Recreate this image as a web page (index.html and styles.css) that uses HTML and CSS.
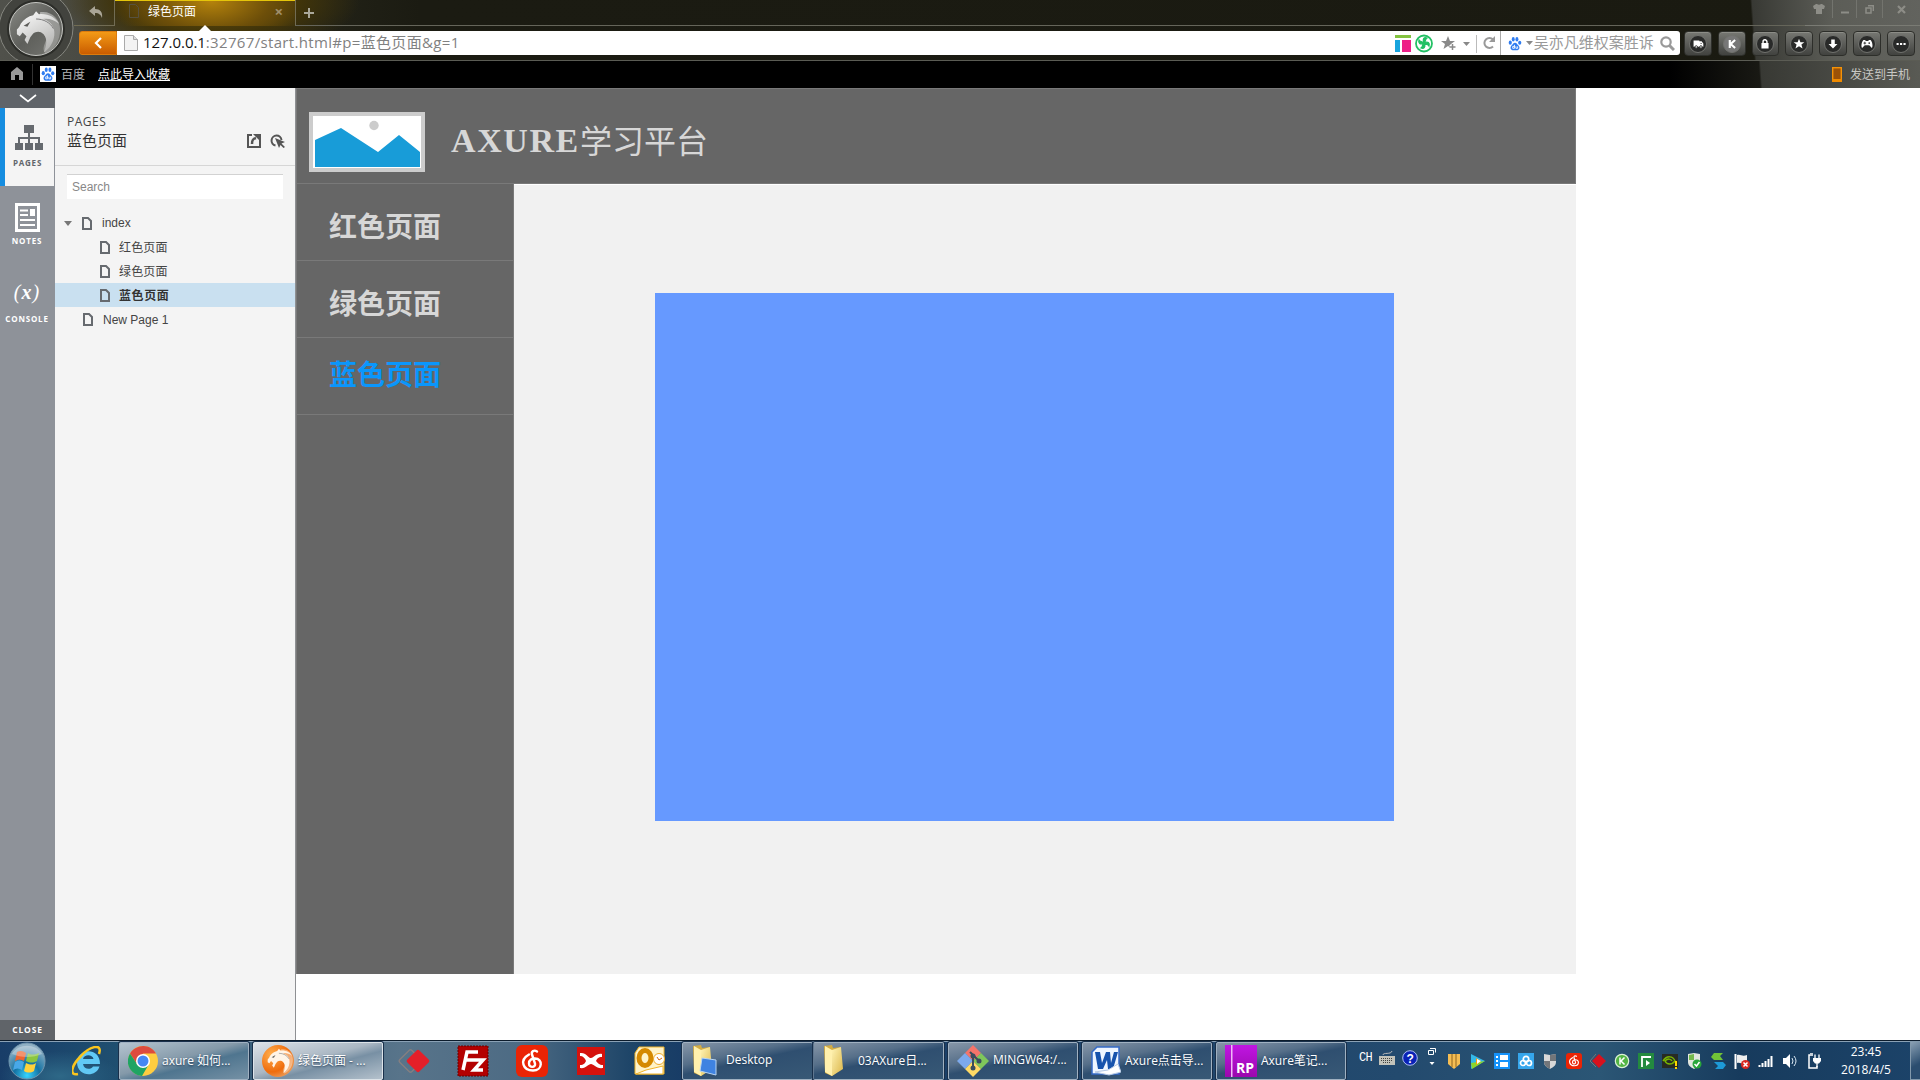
FILE: index.html
```html
<!DOCTYPE html>
<html lang="zh-CN">
<head>
<meta charset="utf-8">
<title>绿色页面</title>
<link rel="stylesheet" href="styles.css">
</head>
<body>
<svg width="0" height="0" class="defs">
  <defs>
    <linearGradient id="silver" x1="0" y1="0" x2="0.6" y2="1"><stop offset="0" stop-color="#fff"/><stop offset="1" stop-color="#b4b4b2"/></linearGradient>
    <linearGradient id="disc" x1="0" y1="0" x2="1" y2="1"><stop offset="0" stop-color="#8b8c87"/><stop offset=".5" stop-color="#5e5f5b"/><stop offset="1" stop-color="#777873"/></linearGradient>
    <linearGradient id="folderg" x1="0" y1="0" x2="1" y2="1"><stop offset="0" stop-color="#fff3b4"/><stop offset="1" stop-color="#dbb649"/></linearGradient>
    <radialGradient id="orb" cx=".5" cy=".9" r=".8"><stop offset="0" stop-color="#36d5ff"/><stop offset=".45" stop-color="#1473a4"/><stop offset="1" stop-color="#8fb0c4"/></radialGradient>
    <radialGradient id="orangeg" cx=".3" cy=".3" r=".9"><stop offset="0" stop-color="#ffae4d"/><stop offset=".6" stop-color="#ef6c0c"/><stop offset="1" stop-color="#e9b27d"/></radialGradient>
    <linearGradient id="purpleg" x1="0" y1="0" x2="0" y2="1"><stop offset="0" stop-color="#c016e2"/><stop offset="1" stop-color="#9b08ad"/></linearGradient>
    <symbol id="file" viewBox="0 0 10 13"><path d="M1 1h5l3 3v8H1z" fill="none" stroke="#666a6f" stroke-width="2"/></symbol>
    <symbol id="paw" viewBox="0 0 16 16"><g fill="#2f7cf0"><ellipse cx="2.6" cy="7" rx="1.8" ry="2.3"/><ellipse cx="6" cy="3.1" rx="1.7" ry="2.5"/><ellipse cx="10.2" cy="3.1" rx="1.7" ry="2.5"/><ellipse cx="13.4" cy="7.2" rx="1.8" ry="2.3"/><path d="M8 7c2 0 2.6 2 4 3.400 2 2 1 5.200-1.300 5.200H5.300C3 15.600 2 12.400 4 10.400 5.400 9 6 7 8 7z"/></g><path d="M7.400 9.500v4h-2v-2.200h2M9 11.200v2.300h2v-2.300" fill="none" stroke="#fff"/></symbol>
    <symbol id="dragon" viewBox="0 0 50 50"><path d="M27 6C39 4 48 13 48 24 48 36 42 45 33 49 28 44 33 38 34 33L27 24z" opacity=".45"/><path d="M3 29l0-5c2-2 3-3 4-6 3-5 8-8 13-9l3-4 3 3c9-1 17 3 21 10-6-5-12-6-17-5 7 2 13 7 12 17-1 8-5 14-11 18 3-7 4-14 0-19-4-4-8-3-11-1l-3 4-3 7-3-4 2-4-4-4-3 4z"/><path d="M10 20l7-4-3 5z" fill="#5c5c59"/><path d="M23 13c8 0 15 4 18 10" fill="none" stroke="#777" stroke-width="1"/></symbol>
    <symbol id="netease" viewBox="0 0 32 32"><rect width="32" height="32" rx="6" fill="#ea2405"/><path d="M21 6.500c-3-2-6 0-5 3l3 9c1 4-6 5-6 0 0-4 3-5 6-5 8 0 8 12-2 12C7 25.500 3 15 13 9.500" fill="none" stroke="#fff" stroke-width="2.400" stroke-linecap="round"/></symbol>
    <symbol id="folder" viewBox="0 0 26 34"><path d="M2 2l8-1 1 3 8-1v22l-9 7-7-3z" fill="#d3ac43"/><path d="M3 2l7 4v26l-7-4z" fill="#fff0ad"/><path d="M10 6l9-3 2 22-11 7z" fill="url(#folderg)"/></symbol>
  </defs>
</svg>
<div class="desktop">
  <header class="chrome">
    <div class="logo">
      <svg width="74" height="61" viewBox="0 0 74 61"><circle cx="36" cy="28" r="37" fill="#42433e" stroke="#85867f" stroke-width="1"/><circle cx="36" cy="29" r="29" fill="#2c2d29"/><circle cx="36" cy="29" r="26.500" fill="url(#disc)" stroke="#c5c6c2" stroke-width="1"/><svg x="14" y="6" width="48" height="49"><use href="#dragon" fill="url(#silver)"/></svg></svg>
    </div>
    <div class="chrome-main">
      <div class="tabs">
        <div class="undo"><svg width="14" height="12" viewBox="0 0 14 12"><path d="M0 5l6-5v3c5 0 8 3 7 9-1-3-3-5-7-5v3z" fill="#aaa596"/></svg></div>
        <div class="tab"><svg width="10" height="14" viewBox="0 0 10 14"><path d="M.5.5h6l3 3v10h-9z" fill="none" stroke="#57513f"/></svg><span>绿色页面</span><b>×</b><i class="notch"></i></div>
        <div class="tabs-rest"><svg width="10" height="10" viewBox="0 0 10 10"><path d="M5 0v10M0 5h10" stroke="#aaa89b" stroke-width="2"/></svg></div>
        <div class="window-controls">
          <span><svg width="12" height="10" viewBox="0 0 12 10"><path d="M0 2l3-2h1c1 1 3 1 4 0h1l3 2-1 3H9v5H3V5H1z" fill="#8d8d87"/></svg></span>
          <span><svg width="8" height="10"><path d="M0 8.500h8" stroke="#8d8d87" stroke-width="2"/></svg></span>
          <span><svg width="9" height="9" viewBox="0 0 9 9"><path d="M1 3h5v5H1zM3 .7h5.300V6" fill="none" stroke="#8d8d87" stroke-width="1.500"/></svg></span>
          <span><svg width="9" height="9"><path d="M1 1l7 7M8 1l-7 7" stroke="#8d8d87" stroke-width="2.200"/></svg></span>
        </div>
      </div>
      <div class="address-row">
        <div class="back"><svg width="8" height="12" viewBox="0 0 8 12"><path d="M7 1L2 6l5 5" fill="none" stroke="#fff" stroke-width="2.200"/></svg></div>
        <div class="address">
          <svg class="page-ico" width="14" height="16" viewBox="0 0 14 16"><path d="M.5.5h9l4 4v11H.5z" fill="#f3f3f3" stroke="#aaa"/><path d="M9.500.500v4h4" fill="#ddd" stroke="#aaa"/></svg>
          <span class="url"><b>127.0.0.1</b>:32767/start.html#p=蓝色页面&amp;g=1</span>
          <svg class="tools" width="104" height="24" viewBox="0 0 104 24"><path d="M3 4h16v3H3z" fill="#83c340"/><path d="M3 9h5v12H3z" fill="#18a4dd"/><path d="M10 9h9v12h-9z" fill="#ee2087"/><circle cx="32" cy="12.500" r="8" fill="none" stroke="#22c064" stroke-width="1.800"/><path d="M32 12c-2-4 0-6 3-5-2 1-1 3-3 5 4-2 6 0 5 3-1-2-3-1-5-3 2 4 0 6-3 5 2-1 1-3 3-5-4 2-6 0-5-3 1 2 3 1 5 3z" fill="#22c064" stroke="#22c064" stroke-width="1.300"/><path d="M56 5l2 5h5l-4 3 1.500 5L56 15l-4.500 3 1.500-5-4-3h5z" fill="#898989"/><path d="M60.500 13v6M57.500 16h6" stroke="#fff" stroke-width="4"/><path d="M60.500 13v6M57.500 16h6" stroke="#898989" stroke-width="1.500"/><path d="M71 11h7l-3.500 4z" fill="#888"/><path d="M84.500 4v18" stroke="#bbb"/><path d="M101 8.500a5 5 0 1 0 0 7" fill="none" stroke="#999" stroke-width="2"/><path d="M103 5v6h-6z" fill="#999"/></svg>
        </div>
        <div class="searchbox">
          <svg width="14" height="15"><use href="#paw"/></svg><svg class="caret" width="7" height="4"><path d="M0 0h7L3.500 4z" fill="#888"/></svg><span>吴亦凡维权案胜诉</span>
          <svg width="15" height="15" viewBox="0 0 15 15"><circle cx="6" cy="6" r="4.700" fill="none" stroke="#999" stroke-width="2.200"/><path d="M9.500 9.500l4.500 4.500" stroke="#999" stroke-width="3"/></svg>
        </div>
        <div class="plugins">
          <span><svg viewBox="0 0 18 18"><path d="M4 5h6.500v7H4zM10 6h3l2 2.500V12h-5z" fill="#fff"/><path d="M12 7.500l1.500 1.500H12z"/><circle cx="7" cy="12.300" r="1.400" fill="#fff" stroke="#292a29"/><circle cx="12.300" cy="12.300" r="1.400" fill="#fff" stroke="#292a29"/></svg></span>
          <span class="pale"><svg viewBox="0 0 18 18"><path d="M6.500 4.500v9M12.500 4.500L7.500 9l5 4.500" stroke="#fff" stroke-width="2.400" fill="none"/></svg></span>
          <span><svg viewBox="0 0 18 18"><path d="M5 8h8v6H5z" fill="#fff"/><path d="M6.800 8V6.500a2.200 2.200 0 0 1 4.400 0V8" fill="none" stroke="#fff" stroke-width="1.600"/></svg></span>
          <span><svg viewBox="0 0 18 18"><path d="M9 3l1.600 4H15l-3.300 2.700L13 14l-4-2.600L5 14l1.300-4.300L3 7h4.400z" fill="#fff"/></svg></span>
          <span><svg viewBox="0 0 18 18"><path d="M7 4h4v5h3l-5 5-5-5h3z" fill="#fff"/></svg></span>
          <span><svg viewBox="0 0 18 18"><path d="M5 4.500h2l.5 1h3l.5-1h2c2 2 3 7 1.500 9l-3-3h-5l-3 3C2 11.500 3 6.500 5 4.500z" fill="#fff"/><path d="M5 8h3M6.500 6.500v3" stroke="#333"/><circle cx="11.500" cy="8" r="1" fill="#333"/></svg></span>
          <span><svg viewBox="0 0 18 18"><path d="M4 8h2.400v2.200H4zM7.900 8h2.400v2.200H7.900zM11.800 8h2.400v2.200h-2.400z" fill="#fff"/></svg></span>
        </div>
      </div>
    </div>
  </header>
  <nav class="bookmarks">
    <svg class="home" width="14" height="14" viewBox="0 0 14 14"><path d="M7 0l6 5v8H9V8H5v5H1V5z" fill="#999"/></svg>
    <i class="sep"></i>
    <span class="baidu"><svg width="14" height="14"><use href="#paw"/></svg></span>
    <span class="bd-text">百度</span><u>点此导入收藏</u>
    <span class="phone"><svg width="10" height="15" viewBox="0 0 10 15"><rect x=".7" y=".7" width="8.600" height="13.600" fill="#9c5207" stroke="#f59207" stroke-width="1.400"/><path d="M0 12h10v3H0z" fill="#f08b00"/></svg><span>发送到手机</span></span>
  </nav>
  <main class="work">
    <aside class="rail">
      <div class="rail-top"><svg width="18" height="9"><path d="M1 1l8 6.500L17 1" fill="none" stroke="#fff" stroke-width="1.700"/></svg></div>
      <div class="rail-item on"><svg width="28" height="25" viewBox="0 0 28 25"><path d="M9 0h10v8H9zM0 18h8v7H0zM10 18h8v7h-8zM20 18h8v7h-8z" fill="#666a6f"/><path d="M14 8v10M4 18v-5h20v5" fill="none" stroke="#666a6f" stroke-width="2"/></svg><span>PAGES</span></div>
      <div class="rail-item"><svg width="25" height="29" viewBox="0 0 25 29"><rect x="1.500" y="1.500" width="22" height="26" fill="none" stroke="#fff" stroke-width="3"/><path d="M5 7.500h8M5 12h8M5 17h15M5 22h15" stroke="#fff" stroke-width="2"/><path d="M15 6h5v7h-5z" fill="#fff"/></svg><span>NOTES</span></div>
      <div class="rail-item console"><em>(<i>x</i>)</em><span>CONSOLE</span></div>
      <div class="rail-close">CLOSE</div>
    </aside>
    <section class="panel">
      <div class="panel-head">
        <h2>PAGES</h2>
        <div class="panel-title"><span>蓝色页面</span>
          <svg width="38" height="14" viewBox="0 0 38 14"><path d="M5 1H1v12h12V9" fill="none" stroke="#555" stroke-width="2"/><path d="M13 5v8" stroke="#555" stroke-width="2"/><path d="M5 10c0-4 1-5 4-6" fill="none" stroke="#555" stroke-width="2.500"/><path d="M6 0h8v8z" fill="#555"/><path d="M34.500 6a5 5 0 1 0-6 5.500" fill="none" stroke="#555" stroke-width="2"/><path d="M28 4l10 4-3.500 1.500L38 13l-1.500 1-3-3-1.500 3z" fill="#555"/></svg></div>
      </div>
      <div class="search">Search</div>
      <ul class="tree">
        <li><i class="arrow"></i><svg width="10" height="13"><use href="#file"/></svg><span>index</span></li>
        <li class="sub"><svg width="10" height="13"><use href="#file"/></svg><span>红色页面</span></li>
        <li class="sub"><svg width="10" height="13"><use href="#file"/></svg><span>绿色页面</span></li>
        <li class="sub sel"><svg width="10" height="13"><use href="#file"/></svg><span>蓝色页面</span></li>
        <li class="root"><svg width="10" height="13"><use href="#file"/></svg><span>New Page 1</span></li>
      </ul>
    </section>
    <article class="proto">
      <div class="proto-head">
        <svg width="116" height="60" viewBox="0 0 116 60"><path d="M2 2h112v56H2z" fill="#fff" stroke="#ccc" stroke-width="4"/><path d="M6 28l26-12 37 24 21-17 21 17v15H6z" fill="#189cd8"/><circle cx="65" cy="13.500" r="4.700" fill="#ccc"/></svg>
        <h1><span>AXURE</span>学习平台</h1>
      </div>
      <div class="proto-body">
        <ul class="menu"><li>红色页面</li><li>绿色页面</li><li class="blue">蓝色页面</li></ul>
        <div class="stage"><div class="block"></div></div>
      </div>
    </article>
  </main>
  <footer class="taskbar">
    <svg class="orb" width="38" height="38" viewBox="0 0 38 38"><circle cx="19" cy="19" r="18" fill="url(#orb)" stroke="#7195ad"/><path d="M9 10c4-2 6-1 9 1l-2 8c-3-2-6-2-9 0z" fill="#ee6530"/><path d="M20 11c3 2 6 2 11 0l-2 8c-4 2-7 2-11 0z" fill="#8bc63f"/><path d="M7 20c3-2 6-2 9 0l-2 8c-3-2-6-2-9 0z" fill="#48a8e8"/><path d="M18 21c4 2 7 2 10 0l-2 8c-3 2-7 2-10 0z" fill="#ffd13b"/><path d="M4 12C10 1 28 1 34 12c-9 4-21 4-30 0z" fill="#fff" opacity=".3"/></svg>
    <svg class="ie" width="30" height="30" viewBox="0 0 30 30"><path d="M28 18H11c1 6 8 6 10 2.500h6.500C24 32 5 31 5 16 6 2 28 1 28 18zM11 13h10.500c-1-5-9.500-5-10.500 0z" fill="#61c9f5"/><path d="M27 8C31-4 17 1 9 10-1 20-3 30 6 28" fill="none" stroke="#fac51d" stroke-width="2.500"/></svg>
    <div class="task bright"><svg width="30" height="30" viewBox="0 0 30 30"><circle cx="15" cy="15" r="15" fill="#ffcd40"/><path d="M2 7.500C8-2 22-3 28 7.500H15L9 18z" fill="#dd4b3e"/><path d="M2 7.500C-4 18 3 29 14 30l7-12H9z" fill="#1fa463"/><circle cx="15" cy="15" r="7" fill="#fff"/><circle cx="15" cy="15" r="5.500" fill="#4587f3"/></svg><span>axure 如何...</span></div>
    <div class="task active"><svg width="32" height="32" viewBox="0 0 32 32"><circle cx="16" cy="16" r="16" fill="url(#orangeg)"/><svg x="4" y="1" width="28" height="28"><use href="#dragon" fill="#fff4e7"/></svg></svg><span>绿色页面 - ...</span></div>
    <div class="pins">
      <svg width="32" height="32" viewBox="0 0 32 32"><rect x="4" y="7.500" width="17" height="17" rx="2" transform="rotate(45 12.500 16)" fill="none" stroke="#847f80" stroke-width="1.400"/><rect x="11.500" y="7.500" width="17" height="17" rx="2" transform="rotate(45 20 16)" fill="#e41f29"/></svg>
      <svg width="32" height="32" viewBox="0 0 32 32"><path d="M1 1h30v30H1z" fill="#b30000" stroke="#690000" stroke-dasharray="2 1"/><path d="M6 25L10 7h11M8 15h9M15 15h11l-9 10h9" fill="none" stroke="#fff" stroke-width="3.500"/></svg>
      <svg width="32" height="32"><use href="#netease"/></svg>
      <svg width="32" height="32" viewBox="0 0 32 32"><path d="M2 2h28v28H2z" fill="#d5120d"/><path d="M5 8c6-1 8 5 11 5s5-5 11-4v3c-4 0-5 2-6 4 2 2 3 4 7 4v3c-7 1-9-4-12-4s-5 5-11 4v-3c4 0 5-2 6-4-1-3-3-5-6-5z" fill="#fff"/></svg>
      <svg width="32" height="32" viewBox="0 0 32 32"><path d="M5 2h25v27H1V8z" fill="#fff3c9" stroke="#f2b52b"/><ellipse cx="11" cy="13" rx="6" ry="7.500" fill="none" stroke="#d58900" stroke-width="5"/><circle cx="25" cy="14" r="5.500" fill="#fff" stroke="#edaa29"/><path d="M23 12l2 3 3-2" fill="none" stroke="#d56b10"/><path d="M12 25l17-4v8H2z" fill="#fff" stroke="#f2b52b"/></svg>
    </div>
    <div class="task group-a"><svg width="26" height="34" viewBox="0 0 26 34"><use href="#folder"/><path d="M11 14l14 2v15l-16-4z" fill="#3f83e1" stroke="#b8d5f3"/></svg><span>Desktop</span></div>
    <div class="task group-b"><svg width="26" height="34"><use href="#folder"/></svg><span>03AXure日...</span></div>
    <div class="task"><svg width="32" height="32" viewBox="0 0 32 32"><path d="M16 0l8 8-8 8-8-8z" fill="#f4746a"/><path d="M8 8l8 8-8 8-8-8z" fill="#7ca9ec"/><path d="M24 8l8 8-8 8-8-8z" fill="#7fc65b"/><path d="M16 16l8 8-8 8-8-8z" fill="#ffda65"/><path d="M13 7l8 8M16 11v12" stroke="#394d5e" stroke-width="2"/><g fill="#394d5e"><circle cx="16" cy="23" r="2.500"/><circle cx="22" cy="16" r="2.500"/><circle cx="16" cy="11" r="2.500"/></g></svg><span>MINGW64:/...</span></div>
    <div class="task"><svg width="30" height="30" viewBox="0 0 30 30"><path d="M6 1h22v27H1V6z" fill="#eef5ff" stroke="#356ac6" stroke-width="1.500"/><path d="M4 6h5l2 11 4-11h4l1 11 3-11h4l-5 17h-5l-1-9-4 9H7z" fill="#1753ad"/><path d="M4 26l13-2 10-6 3 8-12 3z" fill="#fff" stroke="#b5c9e4"/></svg><span>Axure点击导...</span></div>
    <div class="task"><svg width="32" height="32" viewBox="0 0 32 32"><path d="M0 0h32v32H0z" fill="url(#purpleg)"/><path d="M6 0h1.500v32H6z" fill="#f0b9f7"/><text x="11" y="28" class="rp">RP</text></svg><span>Axure笔记...</span></div>
    <div class="tray">
      <div class="lang"><span>CH</span><svg width="16" height="16" viewBox="0 0 16 16"><path d="M0 6h16v9H0z" fill="#c2c2b9"/><path d="M2 8.500h12M2 10.500h12M4 12.500h8" stroke="#42433f" stroke-dasharray="1 1"/><path d="M4 5c0-3 8 0 9-4" fill="none" stroke="#bbb"/></svg><svg width="16" height="16" viewBox="0 0 16 16"><circle cx="8" cy="8" r="7.300" fill="#0a22b6" stroke="#aabbf4"/><text x="4.500" y="12.500" class="q">?</text></svg><svg width="8" height="19" viewBox="0 0 8 19"><path d="M2 .5h5.500v4M.5 2.500h5v4h-5z" fill="none" stroke="#fff"/><path d="M1.500 14h5L4 17z" fill="#fff"/></svg></div>
      <div class="icons">
        <svg viewBox="0 0 16 16"><path d="M2 1h12v10l-6 5-6-5z" fill="#f5bd53"/><path d="M6 1v13M10 1v13" stroke="#8d6420"/></svg>
        <svg viewBox="0 0 16 16"><path d="M1 1l14 7-14 8z" fill="#34b8e8"/><path d="M1 10l14-2-13 8z" fill="#8ed52a"/><path d="M6 5l5 3-5 4z" fill="#ff9b0d"/><path d="M7 6l4 2-4 3z" fill="#fff"/></svg>
        <svg viewBox="0 0 16 16"><path d="M0 0h16v16H0z" fill="#1593fb"/><path d="M6 2h8v5H6zM6 9h8v5H6zM2 3h2v2H2zM2 7h2v2H2zM2 11h2v2H2z" fill="#fff"/></svg>
        <svg viewBox="0 0 16 16"><path d="M0 0h16v16H0z" fill="#35a6ec"/><g fill="none" stroke="#fff" stroke-width="1.700"><circle cx="8" cy="6" r="2.700"/><circle cx="5" cy="10" r="2.500"/><circle cx="11" cy="10" r="2.500"/></g></svg>
        <svg viewBox="0 0 16 16"><path d="M2 1l6 1 6-1v8c0 4-3 5-6 7-3-2-6-3-6-7z" fill="#d8d8d8"/><path d="M8 2l6-1v7H8zM2 8h6v8c-4-2-6-4-6-8z" fill="#73767a"/></svg>
        <svg><use href="#netease"/></svg>
        <svg viewBox="0 0 16 16"><path d="M6 1L0 8l6 6" fill="none" stroke="#777"/><path d="M9 1l7 7-7 7-7-7z" fill="#d8111d"/></svg>
        <svg viewBox="0 0 16 16"><circle cx="8" cy="8" r="6.700" fill="#53b544" stroke="#dcf2d7" stroke-width="1.200"/><path d="M6 4.500v7M10.500 4.500L7 8l3.500 3.500" stroke="#fff" stroke-width="1.500" fill="none"/></svg>
        <svg viewBox="0 0 16 16"><path d="M0 0h16v16H0z" fill="#238a3f"/><path d="M4 14V4h9" stroke="#fff" stroke-width="1.800" fill="none"/><path d="M8 7l4 3-4 3z" fill="#fff"/></svg>
        <svg viewBox="0 0 16 16"><path d="M0 1h16v14H0z" fill="#272b23"/><path d="M1 8c4-6 10-5 12 0-3 4-8 4-10 0 3-3 6-2 7 0" fill="none" stroke="#79b500" stroke-width="1.500"/><path d="M13 8h2v5h-2zM13 14h2v2h-2z" fill="#ffd800"/></svg>
        <svg viewBox="0 0 16 16"><path d="M2 1l6-1 6 1v8c0 4-3 5-6 7-3-2-6-3-6-7z" fill="#e1e6df"/><path d="M3 2l5-1v6H3z" fill="#73b94b"/><circle cx="11" cy="11" r="4.500" fill="#29a63b"/><path d="M8.500 11l2 2 3-4" fill="none" stroke="#fff" stroke-width="1.500"/></svg>
        <svg viewBox="0 0 16 16"><path d="M4 0h9l-3 3 3 4H4L1 4z" fill="#71c437"/><path d="M4 9h9l3 3-3 4H5l3-3z" fill="#1d9ad8"/></svg>
        <svg viewBox="0 0 16 16"><path d="M1.500 1v15" stroke="#fff" stroke-width="2"/><path d="M3 2c4-1 5 2 10 0v8c-5 2-6-1-10 0z" fill="#eee"/><circle cx="11.500" cy="11.500" r="4.500" fill="#d92720"/><path d="M9.500 9.500l4 4m0-4l-4 4" stroke="#fff" stroke-width="1.500"/></svg>
        <svg viewBox="0 0 16 16"><path d="M1.500 12v2M4.500 10v4M7.500 8v6M10.500 6v8M13.500 3v11" stroke="#fff" stroke-width="2"/></svg>
        <svg viewBox="0 0 16 16"><path d="M1 5h3l4-4v14l-4-4H1z" fill="#fff"/><path d="M10 5q2 3 0 6M12 3q4 5 0 10" fill="none" stroke="#dce9f4"/></svg>
        <svg viewBox="0 0 16 16"><path d="M7 2H3v13h8v-2M4 0h3" fill="none" stroke="#fff" stroke-width="1.500"/><path d="M7 5h8v3l-2 2.500H9L7 8z" fill="#fff"/><path d="M9 1.500V5M13 1.500V5M11 10v4" fill="none" stroke="#fff" stroke-width="1.300"/></svg>
      </div>
      <div class="clock"><span>23:45</span><span>2018/4/5</span></div>
      <div class="peek"></div>
    </div>
  </footer>
</div>
</body>
</html>
```
FILE: styles.css
```css
* { box-sizing: border-box; }
body { margin: 0; font-family: "Open Sans", "Noto Sans CJK SC", sans-serif; font-size: 12px; background: #fff; }
ul, h1, h2 { margin: 0; padding: 0; list-style: none; font-weight: 400; }
svg { display: block; flex: none; }
.defs { position: absolute; }
.desktop { width: 1920px; height: 1080px; overflow: hidden; display: flex; flex-direction: column; white-space: nowrap; }

/* browser frame */
.chrome { height: 61px; flex: none; display: flex; border-bottom: 1px solid #5b5c54;
  background: linear-gradient(86deg, transparent 1750px, #383934 1752px, #5c5d57 1830px, #62635e 1920px), radial-gradient(ellipse 150px 58px at 210px 0, #6f5408, #40340a 60%, transparent), linear-gradient(90deg, #50514b, #4a4b44 80px, #2b2b1d 200px, #1b1b12 420px, #1a1a11); }
.logo { width: 74px; overflow: hidden; }
.chrome-main { flex: 1; min-width: 0; }
.tabs { height: 26px; display: flex; }
.undo { width: 41px; padding: 6px 0 0 15px; border-right: 1px solid #716c54; border-bottom: 1px solid #716c54; }
.tab { width: 180px; position: relative; display: flex; padding: 3px 12px 0 14px; color: #fff; line-height: 15px; border-top: 1px solid #e5c50a;
  background: radial-gradient(ellipse 100px 50px at 96px 0, #b5830c, #6c4e09 60%, transparent); }
.tab span { margin-left: 9px; flex: 1; }
.tab b { font-size: 15px; color: #a1906b; line-height: 14px; }
.notch { position: absolute; left: 83px; bottom: -6px; border: 7px solid transparent; border-top: 0; border-bottom-color: #fff; }
.tabs-rest { flex: 1; border-left: 1px solid #716c54; border-bottom: 1px solid #65655a; padding: 8px 0 0 8px; }
.window-controls { border-bottom: 1px solid #7a7b74; width: 115px; display: grid; grid-template-columns: 28px 24px 26px 37px; }
.window-controls span { height: 18px; display: flex; justify-content: center; align-items: center; border-right: 1px solid #73746e; }
.window-controls span:last-child { border: 0; }
.address-row { height: 34px; padding: 5px 5px 4px; display: flex; }
.back { width: 38px; height: 24px; background: linear-gradient(#f39a16, #c95c00); border: 1px solid #dc7b0d; border-radius: 3px 0 0 3px; display: flex; align-items: center; justify-content: center; }
.address { width: 1383px; height: 24px; background: #fff; display: flex; align-items: center; padding-left: 7px; }
.url { font-size: 15px; line-height: 20px; padding-bottom: 2px; letter-spacing: .33px; color: #818181; margin-left: 5px; flex: 1; }
.url b { font-weight: 400; color: #111; letter-spacing: -.05px; }
.tools { margin-right: 4px; }
.searchbox { width: 180px; height: 24px; background: #fff; border-left: 1px solid #aaa; border-radius: 0 3px 3px 0; display: flex; align-items: center; padding-left: 7px; }
.searchbox .caret { margin: 0 2px 0 4px; }
.searchbox span { font-size: 15px; line-height: 20px; padding-bottom: 2px; color: #999; margin: 0 6px 0 -1px; }
.plugins { display: flex; gap: 6px; margin-left: 4px; }
.plugins span { width: 27.900px; height: 25px; border: 1px solid #2d2e2a; border-radius: 4px; background: linear-gradient(#777873, #41423f); box-shadow: inset 0 1px #8c8d87; display: flex; align-items: center; justify-content: center; }
.plugins svg { width: 18px; height: 18px; border-radius: 9px; background: #292a29; border: 1px solid #71726e; }
.plugins .pale svg { background: #777; }
.bookmarks { height: 27px; flex: none; display: flex; align-items: center; padding: 0 10px 1px 10px; color: #aaa; background: linear-gradient(86deg, transparent 1756px, #383934 1758px, #5a5b55 1920px), linear-gradient(90deg, #000 1670px, #191914 1760px); }
.sep { width: 1px; height: 21px; background: #333; margin: 0 7px 0 8px; }
.baidu { width: 16px; height: 16px; padding: 1px; background: #fff; }
.bd-text { margin-left: 5px; color: #b5b5b5; }
.bookmarks u { color: #fff; margin-left: 13px; text-underline-offset: 1px; }
.phone { display: flex; align-items: center; gap: 8px; margin-left: auto; color: #c8c8c4; }

/* prototype player */
.work { flex: 1; min-height: 0; display: flex; }
.rail { width: 55px; background: #8e9299; color: #fff; display: flex; flex-direction: column; }
.rail-top { height: 20px; background: #606469; display: flex; align-items: center; justify-content: center; }
.rail-item { height: 78px; padding: 17px 1px 0 0; display: flex; flex-direction: column; align-items: center; font-size: 8px; font-weight: 700; letter-spacing: .8px; line-height: 12px; }
.rail-item svg { height: 29px; }
.rail-item span { margin-top: 3px; }
.rail-item.on { background: #f4f4f4; border-left: 5px solid #168de0; border-right: 1px solid #8e9299; padding: 14px 4px 0 0; color: #62666b; }
.rail-item.on svg { height: 25px; margin: 3px 0 1px 3px; }
.rail-item.on span { margin-top: 6px; }
.console em { font: normal 20px/22px "Liberation Serif", serif; height: 29px; letter-spacing: 1px; font-style: italic; }
.console em i { font-weight: 700; }
.rail-close { margin-top: auto; height: 20px; background: #606469; text-align: center; font-size: 8.500px; line-height: 20px; font-weight: 700; letter-spacing: .8px; }
.panel { width: 241px; background: #f4f4f4; border-right: 1px solid #8e9093; }
.panel-head { height: 78px; border-bottom: 1px solid #d6d6d6; padding: 25px 10px 0 12px; color: #444; }
.panel h2 { font-size: 12px; line-height: 17px; letter-spacing: .5px; }
.panel-title { display: flex; align-items: center; justify-content: space-between; height: 22px; font-size: 15px; color: #333; }
.panel-title span { line-height: 20px; padding-bottom: 2px; }
.search { margin: 8px 12px 12px; height: 25px; background: #fff; border-top: 1px solid #d2d2d2; padding-left: 5px; font: 12px/24px "Liberation Sans", sans-serif; color: #888; }
.tree li { height: 24px; display: flex; align-items: center; padding-left: 9px; font-family: "Liberation Sans", "Noto Sans CJK SC", sans-serif; color: #444; line-height: 24px; }
.tree span { margin-left: 10px; }
.tree li.sub { padding-left: 45px; }
.tree li.sub span { margin-left: 9px; padding-top: 2px; letter-spacing: .15px; }
.tree li.root { padding: 1px 0 0 28px; }
.tree li.sel { background: #c9e0f0; font-weight: 700; color: #333; }
.tree li.sel span { letter-spacing: .6px; }
.arrow { border: 4.500px solid transparent; border-top: 5px solid #777; border-bottom: 0; margin-right: 10px; }

/* prototype page */
.proto { width: 1280px; height: 886px; background: #f1f1f1; display: flex; flex-direction: column; }
.proto-head { height: 96px; flex: none; background: #666; border: 1px solid #797979; display: flex; padding: 23px 0 0 12px; }
.proto-head h1 { display: flex; margin-left: 26px; font-size: 32px; line-height: 55px; color: #d7d7d7; font-family: "Noto Sans CJK SC", sans-serif; font-weight: 400; }
.proto-head h1 span { font: 700 34px/58px "Liberation Serif", serif; letter-spacing: 1.600px; }
.proto-body { flex: 1; display: flex; }
.menu { width: 218px; background: #666; border: solid #797979; border-width: 0 1px; }
.menu li { height: 77px; border-bottom: 1px solid #797979; padding-left: 32px; font: 700 28px/83px "Noto Sans CJK SC", sans-serif; color: #d7d7d7; }
.menu .blue { color: #0a96fc; line-height: 71px; }
.stage { flex: 1; border-top: 1px solid #fff; padding: 108px 0 0 141px; }
.block { width: 739px; height: 528px; background: #6699ff; }

/* taskbar */
.taskbar { height: 40px; flex: none; display: flex; align-items: center; border-top: 1px solid #0c1c2c; box-shadow: inset 0 1px #8aa1b5; color: #fff;
  background: radial-gradient(ellipse 60px 25px at 60px 35px, #2e6887, transparent), linear-gradient(90deg, #183d68, #1f4f70 120px, #58748a 400px, #4d6b84 520px, #1e4568 630px, #173b66 690px, #234a6e 1400px, #2b5675 1600px, #173b5d 1740px, #1c4369); }
.orb { margin: 0 26px 0 8px; }
.ie { margin-right: 17px; }
.task { width: 130px; height: 38px; margin-right: 4px; flex: none; border: 1px solid #a0b1c1; border-radius: 2px; box-shadow: 0 0 0 1px #19304b; display: flex; align-items: center; padding-left: 8px; gap: 4px;
  background: linear-gradient(168deg, #8696a8, #566f89 35%, #2f4f70 50%, #385976); }
.task.bright { background: linear-gradient(165deg, #b4c4cf, #8499a9 45%, #4f758f 60%, #7591a5); }
.task.active { background: linear-gradient(165deg, #dce2e8, #aab7c3 45%, #7890a4 60%, #b4c1cc); border-color: #dce3e8; }
.task span { text-shadow: 0 1px 2px #203a55; padding-bottom: 2px; }
.pins { display: flex; gap: 27px; margin: 0 16px 0 11px; flex: none; }
.group-a { width: 131px; margin: 0; gap: 9px; }
.group-b { width: 131px; border-left-color: #60778f; gap: 10px; }
.rp { font: 700 14px "Open Sans", sans-serif; fill: #fff; }
.q { font: 700 12px "Liberation Sans", sans-serif; fill: #fff; }
.tray { flex: 1; display: flex; align-items: center; height: 39px; }
.lang { display: flex; align-items: center; gap: 7px; margin-left: 9px; height: 26px; align-self: flex-start; padding-top: 7px; width: 87px; }
.lang span { font: 12px "Liberation Mono", monospace; letter-spacing: -.6px; }
.lang svg:last-child { margin-left: 3px; }
.icons { display: flex; gap: 8px; }
.icons svg { width: 16px; height: 16px; }
.clock { width: 88px; text-align: center; line-height: 18px; display: flex; flex-direction: column; }
.peek { width: 14px; height: 39px; margin-left: auto; border: 1px solid #8299ac; background: linear-gradient(150deg, #8aa0b3, #2b4d6f 60%); }
```
